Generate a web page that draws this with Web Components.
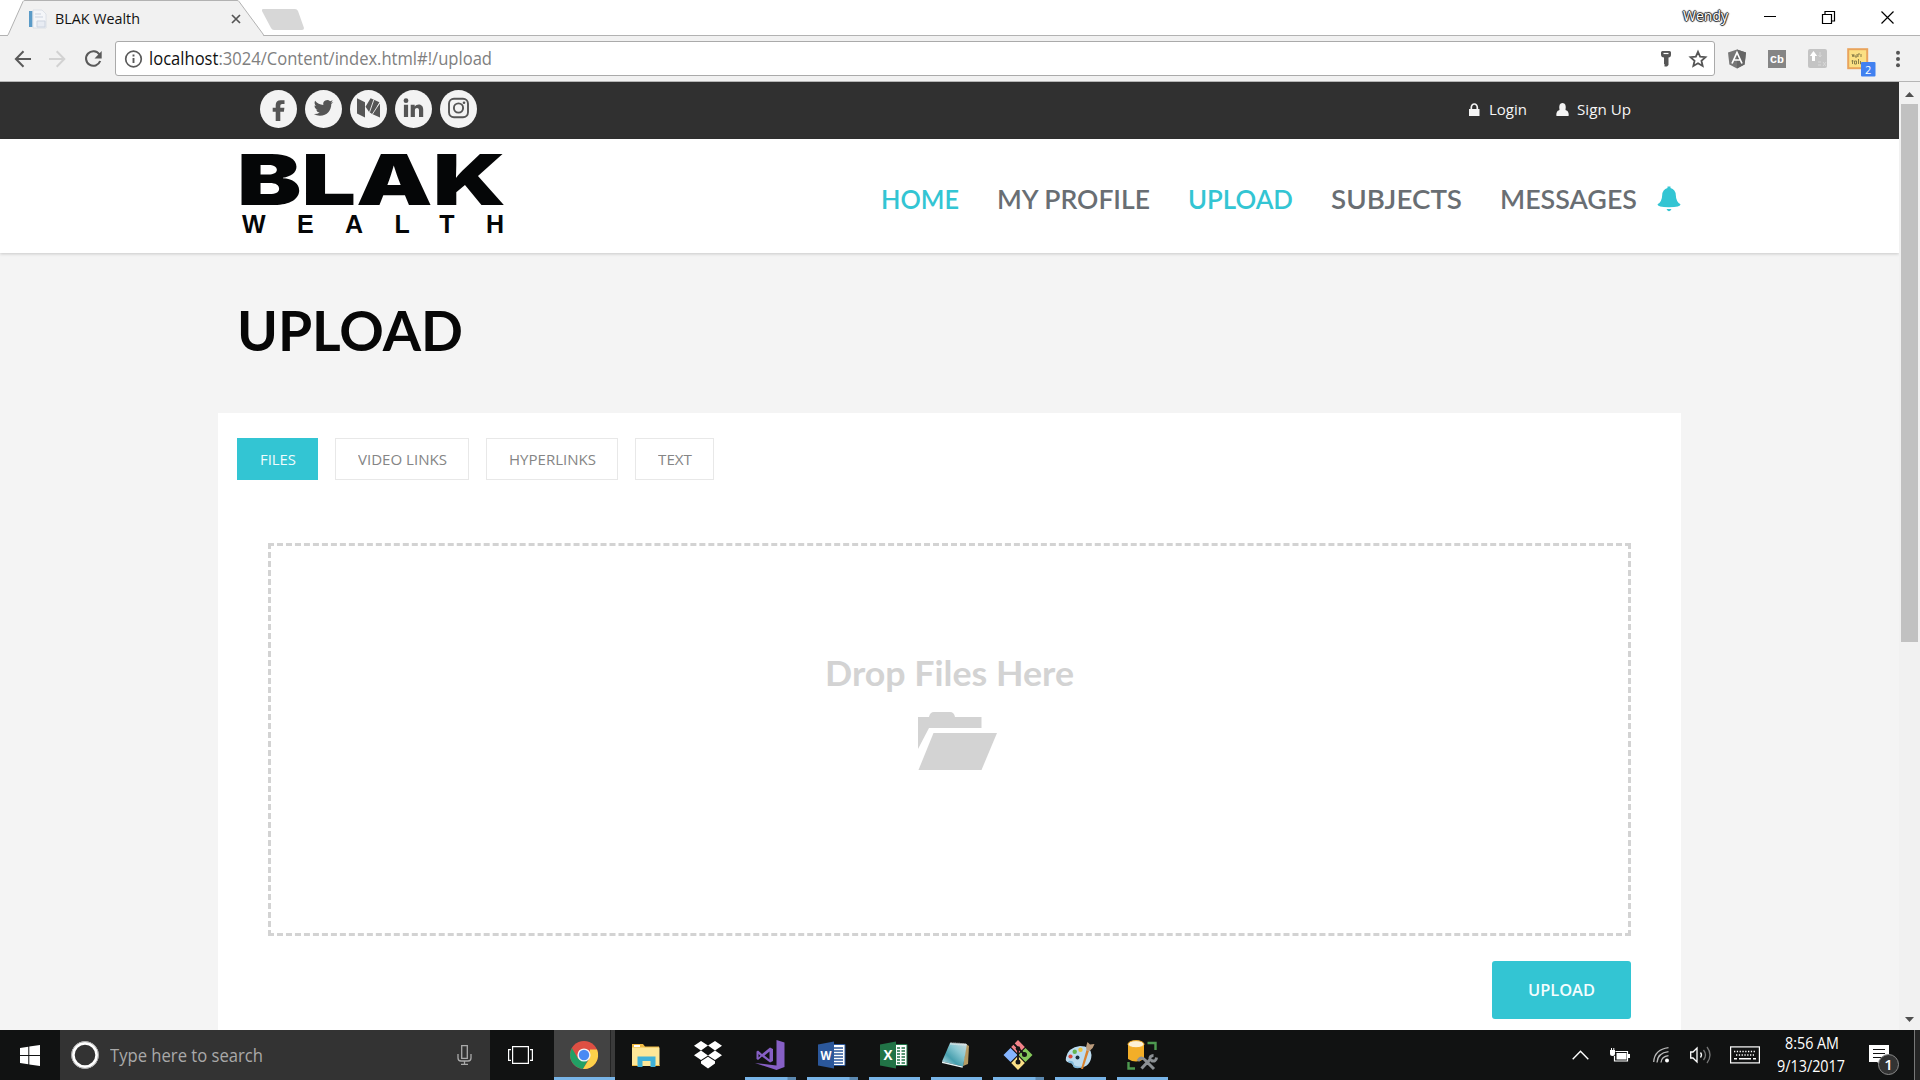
<!DOCTYPE html>
<html lang="en">
<head>
<meta charset="utf-8">
<title>BLAK Wealth</title>
<style>
html,body{margin:0;height:100%;overflow:hidden;background:#fff}
</style>
</head>
<body>
<desktop-screen></desktop-screen>
<script>
const define = (name, css, html) => {
  const t = document.createElement('template');
  t.innerHTML = `<style>*{box-sizing:border-box}${css}</style>${html}`;
  customElements.define(name, class extends HTMLElement {
    constructor() {
      super();
      this.attachShadow({mode: 'open'}).appendChild(t.content.cloneNode(true));
    }
  });
};

/* One line of text, condensed or letter-spaced to an exact width (w). */
customElements.define('fit-text', class extends HTMLElement {
  constructor() {
    super();
    this.attachShadow({mode: 'open'}).innerHTML =
      `<style>:host{display:block;flex:none;white-space:nowrap}span{display:inline-block;transform-origin:0 50%}</style><span><slot></slot></span>`;
  }
  connectedCallback() {
    const w = +this.getAttribute('w');
    const s = this.shadowRoot.querySelector('span');
    this.style.width = w + 'px';
    const fit = () => {
      s.style.transform = ''; s.style.letterSpacing = '';
      const n = s.offsetWidth;
      if (!n) return;
      const exact = s.getBoundingClientRect().width;
      if (this.hasAttribute('spread')) {
        s.style.letterSpacing = (w - exact) / (this.textContent.trim().length - 1) + 'px';
      } else s.style.transform = `scaleX(${w / exact})`;
    };
    fit();
    requestAnimationFrame(fit);
  }
});

const ICONS = {
  page: [20,20,`<rect x="1" y="2" width="3.500" height="16" fill="#5a9bc8"/><path d="M5 1h9l4 4v14H5z" fill="#f4f6f9" stroke="#d8dde4" stroke-width=".8"/><path d="M7 5h6M7 8h8M9 12h8v6H9z" stroke="#ccd3df" fill="#e8ecf3"/>`],
  tabclose: [10,10,`<path d="M1 1l8 8M9 1l-8 8" stroke="#555" stroke-width="1.7"/>`],
  back: [18,18,`<path d="M16 9H1.500M8.500 1.300L.9 9l7.600 7.700" fill="none" stroke="#5a5a5a" stroke-width="2"/>`],
  forward: [18,18,`<path d="M0 9h15M7.700 1.300L15.300 9l-7.600 7.700" fill="none" stroke="#d2d2d2" stroke-width="2"/>`],
  reload: [18,18,`<path d="M14.400 4.400A7.300 7.300 0 1 0 15.200 11" fill="none" stroke="#5a5a5a" stroke-width="2.1"/><path d="M16.700 1v7.400H9.500z" fill="#5a5a5a"/>`],
  info: [18,18,`<circle cx="8.500" cy="9" r="7.800" fill="none" stroke="#5a5a5a" stroke-width="1.7"/><path d="M8.500 8v5M8.500 4.600v1.900" stroke="#5a5a5a" stroke-width="1.9"/>`],
  key: [12,16,`<path d="M1 1.500Q1 0 2.500 0h7Q11 0 11 1.500v2Q11 6.500 8.500 6.500V14L7 15.500H4.500V13H4V6.500Q1 6.500 1 3.500z" fill="#555"/><path d="M3.500 2.500h5" stroke="#fff" stroke-width="1.2"/>`],
  star: [18,18,`<path d="M9 1.800l2.150 4.900 5.300.5-4 3.600 1.200 5.200L9 13.300 4.350 16l1.200-5.200-4-3.600 5.300-.5z" fill="none" stroke="#555" stroke-width="1.8"/>`],
  angular: [20,20,`<path d="M10 .5l9 3-1.400 12L10 19.500 2.400 15.500 1 3.500z" fill="#777"/><path d="M10 .5l9 3-1.400 12L10 19.500z" fill="#666"/><path d="M5 14.500L10 3.500l5 11M7 11h6" fill="none" stroke="#fff" stroke-width="1.7"/>`],
  cb: [18,18,`<rect width="18" height="18" fill="#858585"/><text x="9" y="12.800" text-anchor="middle" textLength="14" lengthAdjust="spacingAndGlyphs" font-family="Liberation Mono" font-weight="700" font-size="11" fill="#fff">Cb</text>`],
  transfer: [19,19,`<rect width="19" height="19" rx="2" fill="#c4c4c4"/><path d="M5.500 12V6" stroke="#fff" stroke-width="3"/><path d="M1.800 7L5.500 2l3.700 5z" fill="#fff"/><path d="M12 3v5m-1.500-2L12 8l1.500-2M10 13h3m-3 3h3m2-3l3 4m0-4l-3 4" stroke="#d8d8d8" fill="none"/>`],
  note: [29,29,`<rect x="1.200" y="1.200" width="19" height="19" fill="#fbe083" stroke="#e9a45c" stroke-width="2"/><path d="M5 6l1 3 1-3m1 1v2h2V6m1 3V6h2m1 0v3M4.500 13h2m-1-1v4m2-3v3h2v-3h-2m4-2v5m2-3v3h2" fill="none" stroke="#8a7f4a" stroke-width="1"/><rect x="14" y="14" width="14.500" height="14.500" rx="1" fill="#4181f0"/><text x="21.200" y="25.500" text-anchor="middle" font-family="Open Sans" font-size="11" fill="#fff">2</text>`],
  dots: [6,18,`<circle cx="3" cy="2.700" r="2" fill="#555"/><circle cx="3" cy="9" r="2" fill="#555"/><circle cx="3" cy="15.300" r="2" fill="#555"/>`],
  minimise: [13,13,`<path d="M0 5.500h12" stroke="#000"/>`],
  restore: [13,13,`<path d="M.5 3.500h9v9h-9zM3 3V.5h9.500v9.500H10" fill="none" stroke="#000" stroke-width="1.200"/>`],
  close: [13,13,`<path d="M.5.5l12 12M12.500.5l-12 12" stroke="#000" stroke-width="1.200"/>`],
  facebook: [37,38,`<ellipse cx="18.500" cy="19" rx="18.500" ry="19" fill="#f3f3f3"/><path d="M15.700 31v-9.300H12.700v-4h3V15q0-4.800 5-4.800h3.800v3.900h-2.400q-1.800 0-1.800 1.700v1.900h4.100l-.5 4h-3.600V31z" fill="#555"/>`],
  twitter: [37,38,`<ellipse cx="18.500" cy="19" rx="18.500" ry="19" fill="#f3f3f3"/><path transform="translate(8.800 8.200) scale(.81)" d="M23.953 4.570a10 10 0 01-2.825.775 4.958 4.958 0 002.163-2.723c-.951.555-2.005.959-3.127 1.184a4.920 4.920 0 00-8.384 4.482C7.690 8.095 4.067 6.130 1.640 3.162a4.822 4.822 0 00-.666 2.475c0 1.710.87 3.213 2.188 4.096a4.904 4.904 0 01-2.228-.616v.06a4.923 4.923 0 003.946 4.827 4.996 4.996 0 01-2.212.085 4.936 4.936 0 004.604 3.417 9.867 9.867 0 01-6.102 2.105c-.39 0-.779-.023-1.170-.067a13.995 13.995 0 007.557 2.209c9.053 0 13.998-7.496 13.998-13.985 0-.21 0-.42-.015-.63A9.935 9.935 0 0024 4.590z" fill="#555"/>`],
  medium: [37,38,`<ellipse cx="18.500" cy="19" rx="18.500" ry="19" fill="#f3f3f3"/><path d="M7 8.300L15 12.300V27.500L7 23.500zM15.500 16.800L20.600 8.300 29.500 12.200 22.500 24 19.300 22.300zM15.600 19.500l3 3.600 0 0zM30 13.500V27.500l-9-4z" fill="#555"/><path d="M19.300 22.800L23.800 9.800M22.300 24.300L30 12.500" stroke="#f3f3f3" stroke-width=".9"/>`],
  linkedin: [37,38,`<ellipse cx="18.500" cy="19" rx="18.500" ry="19" fill="#f3f3f3"/><circle cx="11" cy="10.700" r="2.400" fill="#555"/><path d="M8.900 14.700h4.200V27H8.900zM15.700 14.700h4v1.700c2-3 8.500-3 8.500 3V27H24v-6.600c0-3.300-4.100-3-4.100 0V27h-4.200z" fill="#555"/>`],
  instagram: [37,38,`<ellipse cx="18.500" cy="19" rx="18.500" ry="19" fill="#f3f3f3"/><rect x="9" y="8.700" width="19" height="18.600" rx="5" fill="none" stroke="#555" stroke-width="1.900"/><circle cx="18.500" cy="18" r="4.600" fill="none" stroke="#555" stroke-width="1.900"/><circle cx="24" cy="12.700" r="1.300" fill="#555"/>`],
  lock: [11,13,`<path d="M0 6h10.500v7H0z" fill="#f4f4f4"/><path d="M2.300 6.500V4.500a3 3.500 0 0 1 6 0v2" fill="none" stroke="#f4f4f4" stroke-width="1.700"/>`],
  person: [13,13,`<path d="M.5 13Q0 13 .5 10 1 7.500 3.500 7 2.300 0 6.500 0T9.500 7q2.500.5 3 3 .5 3 0 3z" fill="#f4f4f4"/>`],
  bell: [24,26,`<path d="M10.500 2V.5h3V2Q18.500 3.500 18.800 9q.2 7 4.700 9.300.3 3-11.500 3T.5 18.300Q5 16 5.200 9 5.500 3.500 10.500 2zM9.500 23h5q-1.200 2.300-2.500 2.300T9.500 23z" fill="#33c5d3"/>`],
  folder: [80,58,`<path d="M0 37V5h11Q12 0 16 0h16q4 0 5 5h26.500v11H11z" fill="#d3d3d3"/><path d="M15.500 21H79L63.500 58H.5z" fill="#d3d3d3"/>`],
  windows: [20,21,`<path d="M0 3l8.300-1.200V10H0zM9.300 1.600L20 0v10H9.300zM0 11h8.300v8.200L0 18zM9.300 11H20v10L9.300 19.400z" fill="#fff"/>`],
  cortana: [28,28,`<circle cx="14" cy="14" r="12" fill="none" stroke="#fff" stroke-width="3.400"/><circle cx="14" cy="14" r="13.400" fill="none" stroke="#999" stroke-width=".8"/>`],
  mic: [15,20,`<path d="M4.700.7h5.600v12.600H4.700zM1 9v4q0 3 3 3h7q3 0 3-3V9M7.500 16v3.300M4 19.300h7" fill="none" stroke="#aaa" stroke-width="1.300"/>`],
  taskview: [25,18,`<path d="M4.600.6h15.800v16.800H4.600zM3 3.600H.6v10.800H3M22 3.600h2.400v10.800H22" fill="none" stroke="#fff" stroke-width="1.200"/>`],
  chrome: [30,30,`<circle cx="15" cy="15" r="14" fill="#de4f43"/><path d="M2.900 8A14 14 0 0 0 14 29l6-10.500L9 18.500z" fill="#22a065"/><path d="M28 9.500A14 14 0 0 1 14 29l6.500-10.500L21 9.500z" fill="#fcd04a"/><circle cx="15" cy="15" r="6.600" fill="#f4f4f4"/><circle cx="15" cy="15" r="5.200" fill="#4a8af4"/>`],
  explorer: [30,30,`<path d="M1 4h11l2 2.500h14V25H1z" fill="#f0ba42"/><path d="M1 7.500h27.500V26H1z" fill="#fde798"/><path d="M3 5h6v2H3z" fill="#fff"/><path d="M6.500 27V16.500h18V27h-5v-6h-8v6z" fill="#3fb1d8"/><path d="M1 26h5.500v-1H1m23.500 1h4v-1h-4" fill="#f0ba42"/>`],
  dropbox: [30,30,`<path d="M8 1l7 4.500-7 5L1 5.800zM22 1l7 4.800-7 4.700-7-5zM1 15.200l7-4.700 7 5-7 4.500zM29 15.200l-7-4.700-7 5 7 4.500zM15 16.700l7 4.600v2.200l-7 5-7-5v-2.200z" fill="#fff"/>`],
  vs: [30,30,`<path d="M21.500 0l8 2.500v24.500L21.500 30 0 23l21.500 2.500z" fill="#865fc5"/><path d="M3 10.500l4 3.500 8-6.500 3 1.500v12l-3 1.500-8-6-4 3.500-1.500-1v-7.500zm.5 3.500v3.500l2-1.700zM14.500 11.500L9.500 15.500l5 4z" fill="#865fc5" fill-rule="evenodd"/>`],
  word: [30,30,`<path d="M15 4.500h13v21H15z" fill="#fff" stroke="#2b579a"/><path d="M17 8h9M17 11h9M17 14h9M17 17h9M17 20h9M17 23h9" stroke="#2b579a" stroke-width="1.500"/><path d="M1 4.500L17 1.500v27L1 25.500z" fill="#2b579a"/><text x="9" y="19.500" text-anchor="middle" textLength="11" lengthAdjust="spacingAndGlyphs" font-family="Open Sans" font-weight="700" font-size="12.500" fill="#fff">W</text>`],
  excel: [30,30,`<path d="M15 4.500h13v21H15z" fill="#fff" stroke="#217346"/><path d="M18 8h3m1.500 0H26M18 11h3m1.500 0H26M18 14h3m1.500 0H26M18 17h3m1.500 0H26M18 20h3m1.500 0H26M18 23h3m1.500 0H26" stroke="#217346" stroke-width="1.700"/><path d="M1 4.500L17 1.500v27L1 25.500z" fill="#217346"/><text x="9" y="20" text-anchor="middle" font-family="Open Sans" font-weight="700" font-size="13.500" fill="#fff">X</text>`],
  notepad: [30,30,`<defs><linearGradient id="g" x1="0" y1="1" x2="1" y2="0"><stop offset="0" stop-color="#cfeaf0"/><stop offset=".35" stop-color="#479fae"/><stop offset=".65" stop-color="#8ac8d2"/><stop offset="1" stop-color="#cdd9db"/></linearGradient></defs><path d="M25 4l3 2-1 18-5 2z" fill="#b59a62"/><path d="M9 3l17 1-4 22.500L1 21.500z" fill="url(#g)"/><path d="M1 21.500l21 5-.5 1.200L1 23z" fill="#e6f3f5"/><path d="M9.500 3.500l16 1" stroke="#eee" stroke-width="2.500" stroke-dasharray="1 1"/>`],
  git: [30,30,`<path d="M15 0l6.800 7-6.800 7-6.800-7z" fill="#f28389"/><path d="M7.500 8l7 7-7 7-7-7z" fill="#86b5ff"/><path d="M22.500 8l7 7-7 7-7-7z" fill="#84c95b"/><path d="M15 16l6.800 7-6.800 7-6.800-7z" fill="#fbe087"/><path d="M10.500 3.500L15 8v14M15 8l7 7" fill="none" stroke="#151515" stroke-width="1.800"/><circle cx="15" cy="8.500" r="2.300" fill="#151515"/><circle cx="21.500" cy="14.500" r="2.500" fill="#151515"/><circle cx="15" cy="22" r="2.500" fill="#151515"/>`],
  paint: [30,30,`<path d="M15 6q11 0 11.500 9Q26 27 14 28q-5 .5-6.500-3.500Q7 22 4 22.500 0 22 1 17.500 3 7.500 15 6z" fill="#bcdcf0"/><path d="M3 21Q9 20 9 25q4 3 10 1-6 4-10.500 1-.5-4-4.500-4z" fill="#80b8da"/><circle cx="12.500" cy="17.500" r="2" fill="#1b3040"/><circle cx="5.500" cy="16.500" r="2.100" fill="#d9493d"/><circle cx="9.700" cy="11.700" r="2.200" fill="#64b450"/><circle cx="15.500" cy="9.800" r="2.200" fill="#ecc23e"/><path d="M16 29l5.500-19 2.500.7L18 29z" fill="#d8822e"/><path d="M21.500 10q-1-3 1-8l2.500 2.500L29.500 4q-1 4-5 7z" fill="#bb9b7c"/>`],
  sql: [30,30,`<path d="M1 4h16v15q-8 5-16 0z" fill="#f3ae28"/><ellipse cx="9" cy="4.200" rx="8" ry="3.600" fill="#fdf1d6" stroke="#f3ae28"/><path d="M20.500 3h8v7M1.500 22v6.500H8" fill="none" stroke="#4e9a50" stroke-width="2.400"/><path d="M11 21q3-6 8 0l8 8M26.500 15.500q-4 0-3.500 4L14.500 28.500M24 20.500q5 2 5.500-3" fill="none" stroke="#8c9094" stroke-width="3"/>`],
  chevron: [17,10,`<path d="M.7 9.300l7.800-8 7.800 8" fill="none" stroke="#fff" stroke-width="1.400"/>`],
  battery: [20,15,`<path d="M5.500 3.500H17.500v9.500H4.500V8" fill="none" stroke="#fff" stroke-width="1.200"/><path d="M6.500 5h10v6.500h-10zM18 6h2v4h-2zM0 2h5v3.500Q5 8 2.500 8T0 5.500zM1 0h1v2H1zM3.300 0h1v2h-1z" fill="#fff"/>`],
  wifi: [17,16,`<path d="M.7 15Q1.500 2.500 15.500.7M4 15.500Q4.500 6 15.500 4.700M8 15.500Q8.500 9.500 15.500 8.700" fill="none" stroke="#bbb" stroke-width="1.300"/><circle cx="14" cy="13.500" r="2" fill="#fff"/>`],
  volume: [21,18,`<path d="M.7 6H3l4-4v14l-4-4H.7z" fill="none" stroke="#fff" stroke-width="1.300"/><path d="M10.500 6.500q2 2.500 0 5" fill="none" stroke="#fff" stroke-width="1.300"/><path d="M13.500 4q4 5 0 10M17 1q6 8 0 16" fill="none" stroke="#777" stroke-width="1.300"/>`],
  keyboard: [30,18,`<rect x=".6" y=".9" width="28.800" height="16" fill="none" stroke="#fff" stroke-width="1.200"/><path d="M4 5.500h22M6 9h18" stroke="#fff" stroke-width="1.300" stroke-dasharray="1.300 1.500"/><path d="M4 12.800h3m2 0h12m2 0h3" stroke="#fff" stroke-width="1.400"/>`],
  action: [30,30,`<path d="M0 0h20v17h-8v3l-4-3H0z" fill="#fff"/><path d="M4 4.500h12M4 8.500h12M4 12.500h9" stroke="#111" stroke-width="1.200"/><circle cx="19.500" cy="19.500" r="10" fill="#333" stroke="#8a8a8a"/><text x="19.500" y="25" text-anchor="middle" font-family="Open Sans" font-weight="600" font-size="15" fill="#fff">1</text>`]
};
customElements.define('ui-icon', class extends HTMLElement {
  constructor() { super(); this.attachShadow({mode: 'open'}); }
  connectedCallback() {
    const [w, h, body] = ICONS[this.getAttribute('name')];
    this.shadowRoot.innerHTML = `<style>:host{display:block;flex:none;width:${w}px;height:${h}px}svg{display:block;overflow:visible}</style><svg width="${w}" height="${h}" viewBox="0 0 ${w} ${h}">${body}</svg>`;
  }
});

define('tab-strip', `
:host{display:flex;height:36px;background:#fff;border-bottom:1px solid #b2b2b2;font:15px/20px "Open Sans",sans-serif;color:#111}
.tab{display:flex;width:257px;height:36px;margin-left:7px;position:relative}
.shape{position:absolute;left:0;top:0}
.row{position:relative;display:flex;padding:0 0 0 21px;align-items:flex-start}
.row>*{flex:none}
.controls{display:flex;margin-left:auto;padding-right:26px}
.user{font-size:14px;color:#fff;text-shadow:0 0 1px #222,1px 0 1px #222,-1px 0 1px #222,0 1px 1px #222,0 -1px 1px #222}
`, `<div class="tab"><svg class="shape" width="257" height="36"><path d="M0 36Q1 35 1.500 34L16 1.500Q16.500.5 18 .5H230Q231.500.5 232 1.500L256 34Q256.500 35 257 36" fill="#f1f1f1" stroke="#b2b2b2"/></svg>
<div class="row"><ui-icon name="page" style="margin-top:9px"></ui-icon><fit-text w="85" style="margin:8px 0 0 7px">BLAK Wealth</fit-text><ui-icon name="tabclose" style="margin:14px 0 0 91px"></ui-icon></div></div>
<svg width="44" height="22" style="margin:9px 0 0 -3px;flex:none"><path d="M2 0H34Q36 0 37 2L43 19Q43 21 41 21H13Q11 21 10 19L1 2Q.5 0 2 0z" fill="#d7d7d7"/></svg>
<div class="controls"><fit-text class="user" w="45" style="margin-top:6px">Wendy</fit-text><ui-icon name="minimise" style="margin:11px 0 0 36px"></ui-icon><ui-icon name="restore" style="margin:11px 0 0 45px"></ui-icon><ui-icon name="close" style="margin:11px 0 0 46px"></ui-icon></div>`);

define('tool-bar', `
:host{display:flex;height:46px;background:#f1f1f1;border-bottom:1px solid #b5b5b5;align-items:center;padding-left:15px;font:18px/24px "Open Sans",sans-serif}
.box{display:flex;align-items:center;width:1600px;height:35px;margin-left:12px;border:1px solid #aaa;border-radius:3px;background:#fff;padding:0 7px 0 9px}
b{font-weight:400;color:#111}
`, `<ui-icon name="back"></ui-icon><ui-icon name="forward" style="margin-left:16px"></ui-icon><ui-icon name="reload" style="margin-left:18px"></ui-icon>
<div class="box"><ui-icon name="info"></ui-icon><fit-text w="343" style="margin-left:6px;color:#808080;position:relative;top:-1px"><b>localhost</b>:3024/Content/index.html#!/upload</fit-text><ui-icon name="key" style="margin-left:auto"></ui-icon><ui-icon name="star" style="margin-left:17px"></ui-icon></div>
<ui-icon name="angular" style="margin-left:12px"></ui-icon><ui-icon name="cb" style="margin-left:21px"></ui-icon><ui-icon name="transfer" style="margin-left:22px"></ui-icon><ui-icon name="note" style="margin:7px 0 0 20px"></ui-icon><ui-icon name="dots" style="margin-left:19px"></ui-icon>`);

define('top-bar', `
:host{display:flex;height:57px;background:#303030;padding:8px 268px 0 260px;color:#f6f6f6;font:15px/38px "Open Sans",sans-serif}
.social{display:flex;gap:8px}
.account{display:flex;margin-left:auto;align-items:center;height:38px}
`, `<div class="social"><ui-icon name="facebook"></ui-icon><ui-icon name="twitter"></ui-icon><ui-icon name="medium"></ui-icon><ui-icon name="linkedin"></ui-icon><ui-icon name="instagram"></ui-icon></div>
<div class="account"><ui-icon name="lock"></ui-icon><fit-text w="38" style="margin-left:9px">Login</fit-text><ui-icon name="person" style="margin-left:29px"></ui-icon><fit-text w="54" style="margin-left:8px">Sign Up</fit-text></div>`);

define('brand-logo', `
:host{display:flex;flex-direction:column;width:264px;color:#050607}
.name{font:900 70px/52px Inter,sans-serif;height:52px}
.sub{font:700 25px/20px "Liberation Sans",sans-serif;margin-top:8px}
`, `<fit-text class="name" w="269" style="margin-left:-5px">BLAK</fit-text><fit-text class="sub" spread w="262">WEALTH</fit-text>`);

define('site-header', `
:host{display:flex;height:114px;background:#fff;padding:15px 218px 0 242px;box-shadow:0 1px 3px rgba(0,0,0,.18);position:relative}
nav{display:flex;margin-left:auto;height:88px;align-items:center;font:600 26px/32px Lato,sans-serif;color:#696e73}
.on{color:#33c5d3}
fit-text{padding-top:1px}
fit-text+fit-text{margin-left:38px}
`, `<brand-logo></brand-logo><nav><fit-text class="on" w="78">HOME</fit-text><fit-text w="153">MY PROFILE</fit-text><fit-text class="on" w="105">UPLOAD</fit-text><fit-text w="131">SUBJECTS</fit-text><fit-text w="137">MESSAGES</fit-text><ui-icon name="bell" style="margin:1px 0 0 20px"></ui-icon></nav>`);

define('tab-button', `
:host{display:flex;height:42px;align-items:center;padding:0 21px 0 22px;border:1px solid #e8e8e8;color:#858585;background:#fff}
:host([active]){background:#33c5d3;border-color:#33c5d3;color:#f1fcfd}
`, `<slot></slot>`);

define('drop-zone', `
:host{display:flex;flex-direction:column;align-items:center;width:1363px;height:393px;border:3px dashed #d3d3d3;padding-top:107px;color:#d3d3d3;font:700 34px/40px Lato,sans-serif}
`, `<fit-text w="249">Drop Files Here</fit-text><ui-icon name="folder" style="margin:19px 0 0 16px"></ui-icon>`);

define('upload-page', `
:host{display:flex;flex-direction:column;flex:1;min-height:0;background:#f4f4f4;font:15px/20px "Open Sans",sans-serif}
h1{margin:0;padding:45px 0 0 237px;font:700 56px/64px Lato,sans-serif;color:#070707;height:160px}
.card{flex:1;width:1463px;margin-left:218px;background:#fff;display:flex;flex-direction:column}
.tabs{display:flex;gap:17px;padding:25px 0 0 19px}
.actions{display:flex;justify-content:flex-end;padding:25px 50px 0 0}
button{all:unset;box-sizing:border-box;display:flex;width:139px;height:58px;justify-content:center;align-items:center;background:#33c5d3;border-radius:3px;color:#f4fdfe;font:600 16px/22px "Open Sans",sans-serif}
`, `<h1><fit-text w="226">UPLOAD</fit-text></h1>
<div class="card"><div class="tabs"><tab-button active><fit-text w="36">FILES</fit-text></tab-button><tab-button><fit-text w="89">VIDEO LINKS</fit-text></tab-button><tab-button><fit-text w="87">HYPERLINKS</fit-text></tab-button><tab-button><fit-text w="34">TEXT</fit-text></tab-button></div>
<drop-zone style="margin:63px 0 0 50px"></drop-zone><div class="actions"><button><fit-text w="67">UPLOAD</fit-text></button></div></div>`);

define('scroll-bar', `
:host{display:flex;flex-direction:column;align-items:center;width:21px;background:#f1f1f1;flex:none}
.thumb{width:17px;height:538px;margin-top:7px;background:#c1c1c1}
svg{display:block}
`, `<svg width="9" height="5" style="margin-top:10px"><path d="M4.500 0L9 5H0z" fill="#505050"/></svg><div class="thumb"></div><svg width="9" height="5" style="margin:auto 0 8px"><path d="M0 0h9L4.500 5z" fill="#505050"/></svg>`);

define('task-button', `
:host{display:flex;width:51px;height:50px;justify-content:center;align-items:center;margin-right:11px;padding-right:2px;flex:none}
:host([open]){border-bottom:3px solid #78b4e7;padding-top:3px}
:host([stacked]){border-image:linear-gradient(90deg,#78b4e7 40px,#5c89b0 41px) 3}
:host([current]){width:61px;margin-right:6px;border-image:none;background:linear-gradient(90deg,#434343 56px,#242424 56px,#242424 57px,#3b3b3b 57px)}
`, `<slot></slot>`);

define('task-bar', `
:host{display:flex;height:50px;background:#111212;align-items:center;color:#fff;font:16px/23px "Open Sans",sans-serif}
.search{display:flex;width:430px;height:50px;margin-left:20px;padding:0 18px 0 11px;align-items:center;background:#333;color:#a9a9a9;font-size:18px}
.apps{display:flex;margin-left:21px}
.clock{display:flex;flex-direction:column;align-items:center;width:68px;margin-left:17px}
.edge{width:6px;height:50px;border-left:1px solid #777;background:#252525;margin-left:15px}
`, `<ui-icon name="windows" style="margin-left:20px"></ui-icon>
<div class="search"><ui-icon name="cortana"></ui-icon><fit-text w="153" style="margin-left:11px">Type here to search</fit-text><ui-icon name="mic" style="margin-left:auto"></ui-icon></div>
<ui-icon name="taskview" style="margin-left:18px"></ui-icon>
<div class="apps"><task-button open current><ui-icon name="chrome"></ui-icon></task-button><task-button><ui-icon name="explorer"></ui-icon></task-button><task-button><ui-icon name="dropbox"></ui-icon></task-button><task-button open stacked><ui-icon name="vs"></ui-icon></task-button><task-button open stacked><ui-icon name="word"></ui-icon></task-button><task-button open><ui-icon name="excel"></ui-icon></task-button><task-button open><ui-icon name="notepad"></ui-icon></task-button><task-button open stacked><ui-icon name="git"></ui-icon></task-button><task-button open><ui-icon name="paint"></ui-icon></task-button><task-button open><ui-icon name="sql"></ui-icon></task-button></div>
<ui-icon name="chevron" style="margin-left:auto"></ui-icon><ui-icon name="battery" style="margin-left:21px"></ui-icon><ui-icon name="wifi" style="margin-left:23px"></ui-icon><ui-icon name="volume" style="margin-left:20px"></ui-icon><ui-icon name="keyboard" style="margin-left:19px"></ui-icon>
<div class="clock"><fit-text w="54" style="margin-left:1px">8:56 AM</fit-text><fit-text w="68">9/13/2017</fit-text></div>
<ui-icon name="action" style="margin:10px 0 0 24px"></ui-icon><div class="edge"></div>`);

define('desktop-screen', `
:host{display:flex;flex-direction:column;width:1920px;height:1080px;overflow:hidden}
.view{display:flex;flex:1;min-height:0}
.site{display:flex;flex-direction:column;width:1899px;overflow:hidden}
`, `<tab-strip></tab-strip><tool-bar></tool-bar><div class="view"><div class="site"><top-bar></top-bar><site-header></site-header><upload-page></upload-page></div><scroll-bar></scroll-bar></div><task-bar></task-bar>`);
</script>
</body>
</html>
